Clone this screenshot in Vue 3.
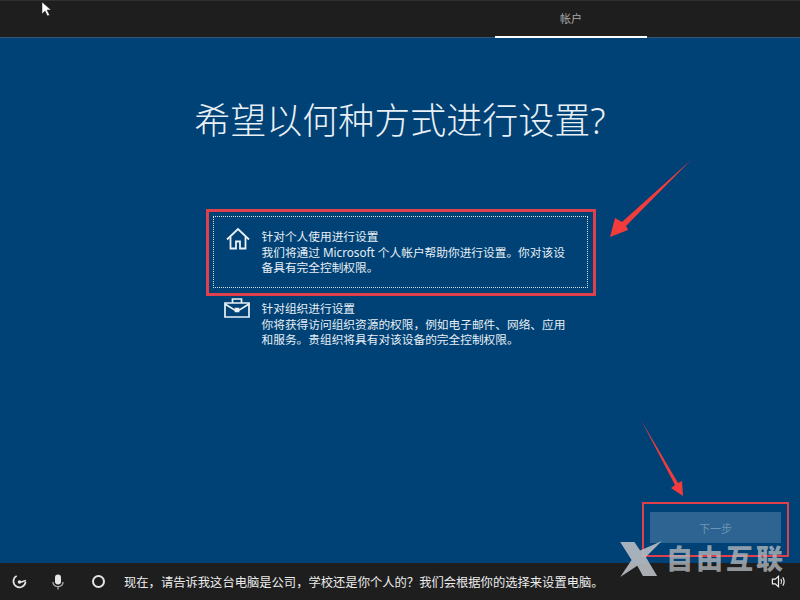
<template>
  <div class="oobe-page">
    <header class="top-bar">
      <div class="step-tab">帐户</div>
    </header>

    <main class="content">
      <h1 class="title">希望以何种方式进行设置?</h1>

      <div class="options">
        <div v-for="opt in options" :key="opt.title" class="option" :class="{ focused: opt.focused }">
          <svg v-if="opt.icon === 'home'" class="option-icon" viewBox="0 0 24 24" fill="none" stroke="#eaf1f6" stroke-width="1.8">
            <path d="M1 12.500 12 2l11 10.500" />
            <path d="M4.500 10v11.500h5.500v-7h4v7h5.500V10" />
          </svg>
          <svg v-else class="option-icon work" viewBox="0 0 26 20" fill="none" stroke="#eaf1f6" stroke-width="1.7">
            <path d="M1 5h24v14H1z" />
            <path d="M8.500 5V1h9v4" />
            <path d="M1 6l9.500 6h5L25 6" />
            <path d="M11.500 10.500h3v3h-3z" fill="#eaf1f6" />
          </svg>
          <div class="option-text">
            <div>{{ opt.title }}</div>
            <div>{{ opt.desc }}</div>
          </div>
        </div>
      </div>

      <div class="actions">
        <button class="btn-next" disabled>下一步</button>
      </div>
    </main>

    <footer class="bottom-bar">
      <svg class="tray-icon access" viewBox="0 0 16 16" fill="none" stroke="#e6e6e6" stroke-width="1.8">
        <path d="M5 2A6.500 6.500 0 1 0 14.500 8.500" />
        <path d="M8 9 15 7" />
        <circle cx="8" cy="8.500" r="1" fill="#e6e6e6" />
      </svg>
      <svg class="tray-icon mic" viewBox="0 0 12 16">
        <rect x="3" y="0.500" width="6" height="10" rx="3" fill="#e6e6e6" />
        <path d="M1 8c0 3 2 4.500 5 4.500S11 11 11 8M6 12.500V15.500" fill="none" stroke="#bbb" stroke-width="1.200" />
      </svg>
      <span class="cortana"></span>
      <p class="speech">{{ speech }}</p>
      <svg class="tray-icon volume" viewBox="0 0 16 16" fill="none" stroke="#eeeeee" stroke-width="1.300">
        <path d="M1.500 5.500h3L8 2.500v11l-3.500-3h-3z" />
        <path d="M10.500 5.500c1 1.500 1 3.500 0 5M12.500 3.500c2 2.500 2 6.500 0 9" />
      </svg>
    </footer>

    <!-- screenshot annotations lying over the page -->
    <div class="mark mark-option"></div>
    <div class="mark mark-next"></div>
    <svg class="overlay" viewBox="0 0 800 600">
      <path d="M691 160 622 222 615 218 610 237 628 230 626 226Z" fill="#f23c3c" />
      <path d="M641 420 678 483 682 481 683 496 671 488 675 485Z" fill="#f23c3c" />
      <path d="M42 2v12l3-3 2.500 5 2-1-2.500-5h4z" fill="#fff" stroke="#222" stroke-width="0.500" />
    </svg>

    <div class="watermark">
      <svg class="wm-logo" viewBox="0 0 46 38">
        <path d="M0 1h15l6 9L44 0 27 17l12 20H24l-6-11L0 38 12 20z" fill="#b9bec3" fill-opacity="0.9" />
      </svg>
      <span class="wm-text">自由互联</span>
    </div>
  </div>
</template>

<script setup>
const options = [
  {
    icon: 'home',
    focused: true,
    title: '针对个人使用进行设置',
    desc: '我们将通过 Microsoft 个人帐户帮助你进行设置。你对该设备具有完全控制权限。'
  },
  {
    icon: 'work',
    focused: false,
    title: '针对组织进行设置',
    desc: '你将获得访问组织资源的权限\uFF0C例如电子邮件、网络、应用和服务。贵组织将具有对该设备的完全控制权限。'
  }
]

const speech = '现在\uFF0C请告诉我这台电脑是公司\uFF0C学校还是你个人的\uFF1F我们会根据你的选择来设置电脑。'
</script>

<style scoped>
.oobe-page {
  position: relative;
  width: 800px;
  height: 600px;
  overflow: hidden;
  display: flex;
  flex-direction: column;
  background: #004275;
  color: #e8eff5;
  font-family: "Noto Sans", "Noto Sans CJK SC", sans-serif;
}
.top-bar {
  height: 37px;
  flex: none;
  display: flex;
  justify-content: flex-end;
  padding-right: 153px;
  background: #1e1e1e;
  border-top: 1px solid #303030;
  box-sizing: border-box;
  box-shadow: 0 1px 0 #33597c;
}
.step-tab {
  width: 152px;
  height: 37px;
  box-sizing: border-box;
  padding-top: 11px;
  text-align: center;
  font-size: 11px;
  line-height: 14px;
  color: #a8a8a8;
  border-bottom: 2px solid #fff;
}
.content {
  flex: 1;
  display: flex;
  flex-direction: column;
  align-items: center;
}
.title {
  margin: 60px 0 0;
  font-size: 36px;
  line-height: 48px;
  font-weight: 300;
  color: #e9f0f5;
  white-space: nowrap;
}
.options {
  width: 375px;
  margin-top: 71px;
  display: flex;
  flex-direction: column;
}
.option {
  display: flex;
  gap: 12px;
  padding: 12px 16px 0 12px;
  min-height: 60px;
  box-sizing: border-box;
  border: 1px dotted transparent;
}
.option.focused {
  height: 72px;
  border-color: #d5dfe8;
}
.option-icon {
  width: 24px;
  height: 24px;
  flex: none;
  margin-top: -2px;
}
.option-icon.work {
  width: 26px;
  height: 20px;
  margin-top: -3px;
  margin-left: -2px;
}
.option-text {
  font-size: 11.700px;
  line-height: 15.500px;
  width: 306px;
}
.actions {
  align-self: flex-end;
  margin-top: auto;
  margin-right: 19px;
  margin-bottom: 20px;
}
.btn-next {
  width: 131px;
  height: 31px;
  border: none;
  background: #2d6491;
  color: #6c94b5;
  font-family: inherit;
  font-size: 11px;
}
.bottom-bar {
  height: 37px;
  flex: none;
  display: flex;
  align-items: center;
  background: #1e1e1e;
  position: relative;
}
.tray-icon {
  flex: none;
}
.access {
  width: 15px;
  height: 15px;
  margin-left: 12px;
}
.mic {
  width: 12px;
  height: 16px;
  margin-left: 25px;
}
.cortana {
  width: 13px;
  height: 13px;
  margin-left: 28px;
  box-sizing: border-box;
  border: 2.500px solid #e6e6e6;
  border-radius: 50%;
}
.speech {
  margin: 0 0 0 19px;
  font-size: 12.300px;
  color: #ececec;
  white-space: nowrap;
}
.volume {
  width: 15px;
  height: 15px;
  margin-left: auto;
  margin-right: 14px;
}
.mark {
  position: absolute;
  box-sizing: border-box;
  border: 3px solid #e0404c;
}
.mark-option {
  left: 206px;
  top: 209px;
  width: 390px;
  height: 87px;
}
.mark-next {
  left: 642px;
  top: 502px;
  width: 147px;
  height: 55px;
  border-width: 2px;
}
.overlay {
  position: absolute;
  left: 0;
  top: 0;
  width: 800px;
  height: 600px;
  pointer-events: none;
}
.watermark {
  position: absolute;
  left: 620px;
  top: 541px;
  display: flex;
  align-items: center;
  gap: 2px;
  pointer-events: none;
}
.wm-logo {
  width: 44px;
  height: 36px;
}
.wm-text {
  font-size: 27px;
  line-height: 32px;
  font-weight: 900;
  letter-spacing: 3px;
  color: rgba(180, 184, 188, 0.8);
  white-space: nowrap;
}
</style>
